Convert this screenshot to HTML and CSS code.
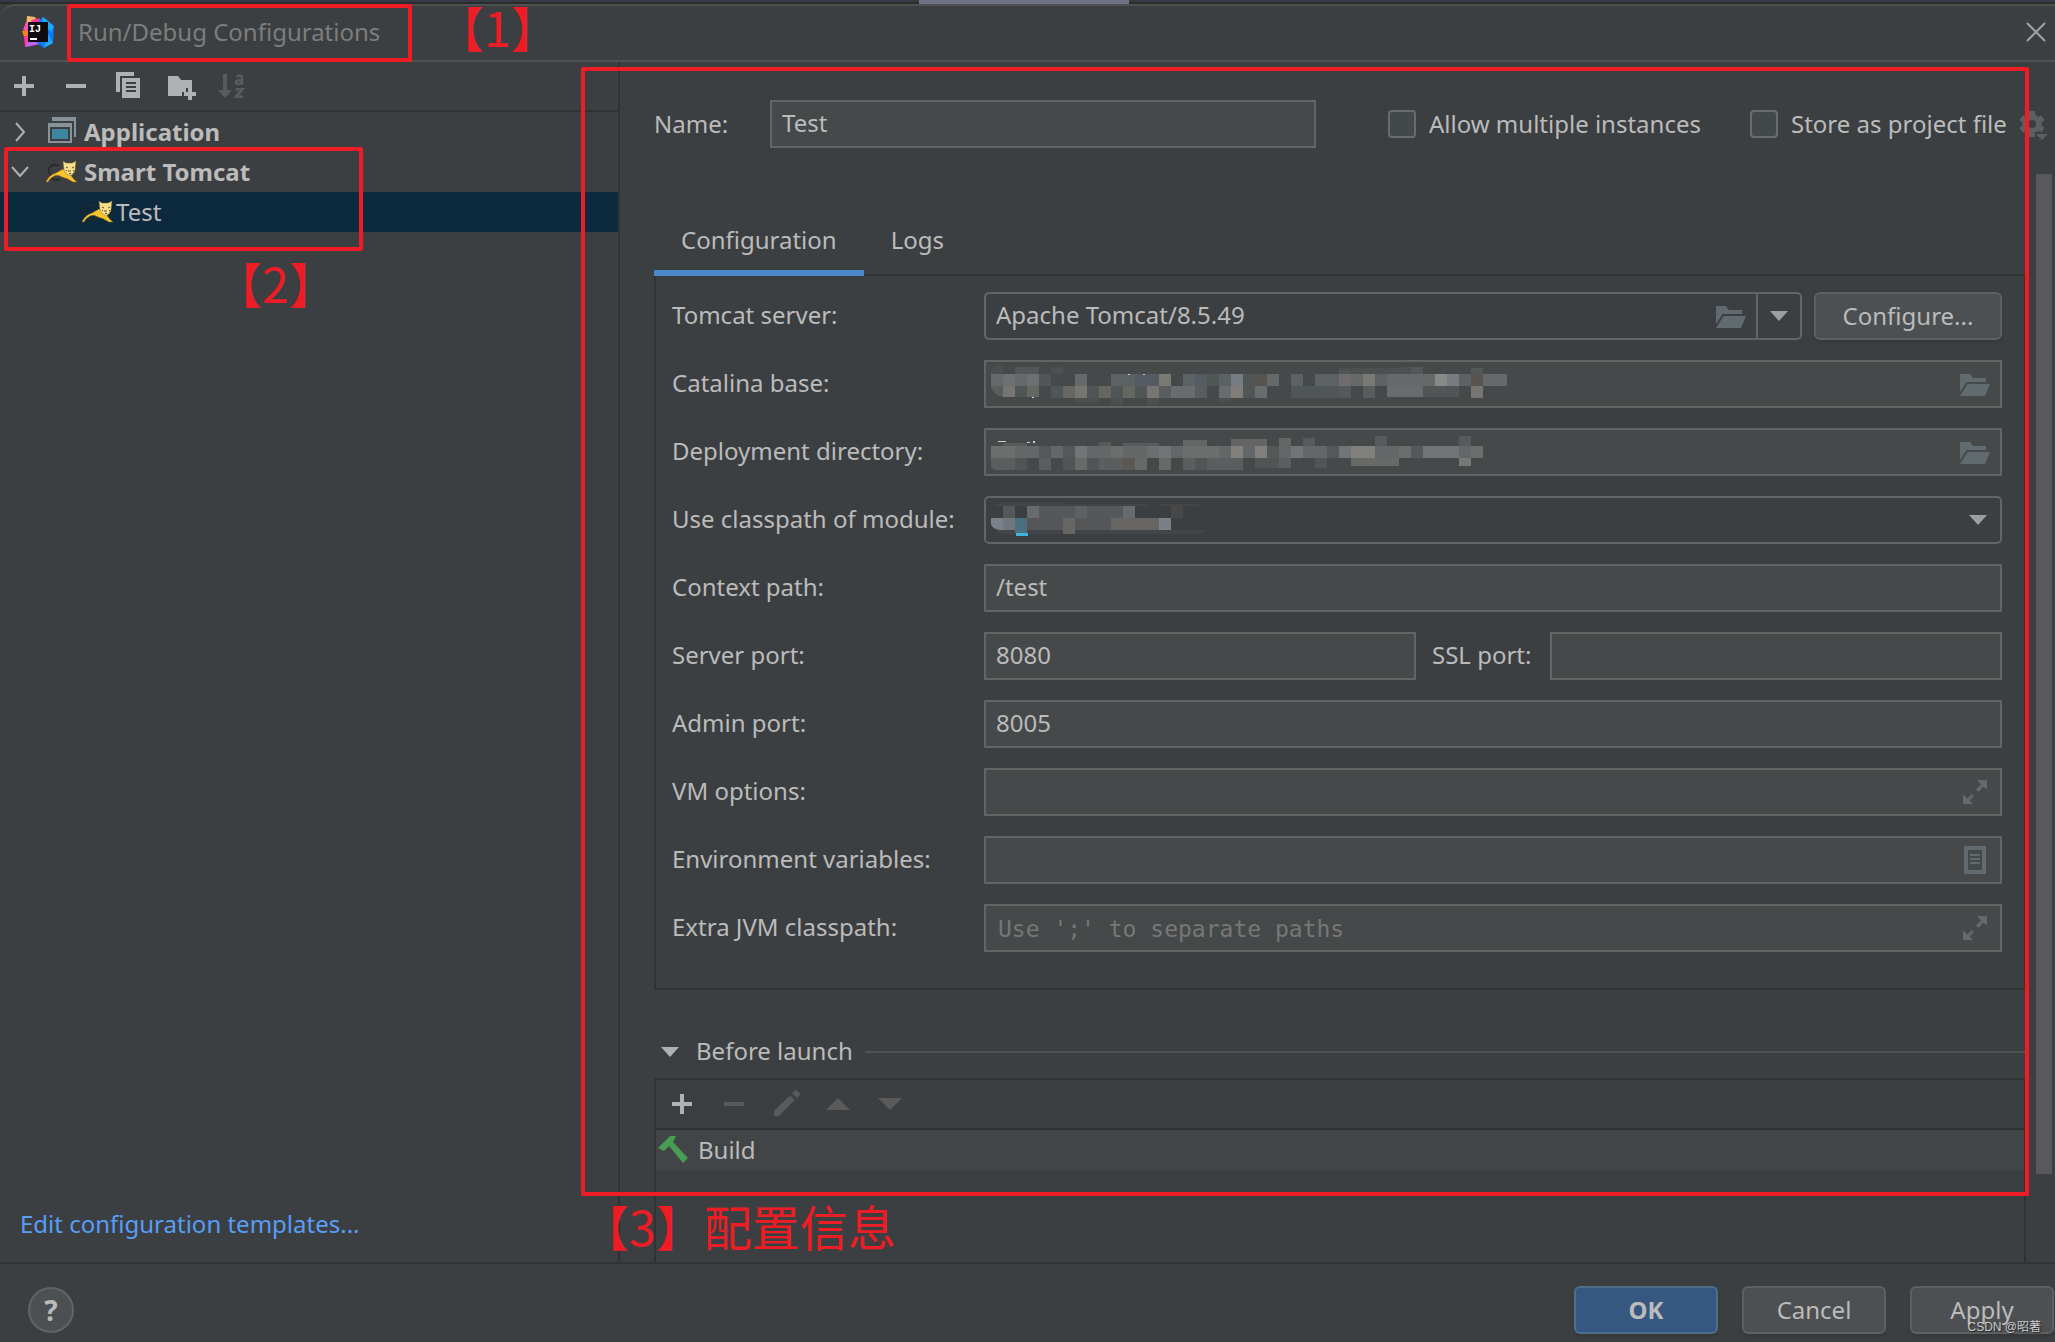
FILE: index.html
```html
<!DOCTYPE html>
<html lang="en">
<head>
<meta charset="utf-8">
<title>Run/Debug Configurations</title>
<link rel="stylesheet" href="styles.css">
</head>
<body>
<svg class="defs" width="0" height="0" aria-hidden="true">
  <symbol id="i-plus" viewBox="0 0 16 16"><path d="M7 3h2v4h4v2H9v4H7V9H3V7h4z"/></symbol>
  <symbol id="i-minus" viewBox="0 0 16 16"><path d="M3 7h10v2H3z"/></symbol>
  <symbol id="i-copy" viewBox="0 0 16 16"><path d="M2 1h9v2H4v8H2z"/><path fill-rule="evenodd" d="M5 4h9v10H5zM7 6v1h5V6zM7 8v1h5V8zM7 10v1h5v-1z"/></symbol>
  <symbol id="i-newfolder" viewBox="0 0 16 16"><path d="M2 3h5l1.500 2H14v4h-3v2H9v2H2z"/><path d="M12 9h2v2h2v2h-2v2h-2v-2h-2v-2h2z"/></symbol>
  <symbol id="i-sort" viewBox="0 0 16 16"><path d="M3.500 2h2v8H8l-3.500 4L1 10h2.500z"/><path fill="none" stroke="currentColor" stroke-width="1.300" d="M10.200 3.400q2.800-1.600 2.800.800v2.900M13 5q-3-.200-3 1.200 0 .900 1.300.800 1.200-.100 1.700-.900M9.700 9.600h3.500l-3.300 3.800h3.600"/></symbol>
  <symbol id="i-folder" viewBox="0 -1 16 16"><path d="M1 2h5l1.500 2H14v2H4.300L1 11z"/><path d="M4.800 7H16l-2.500 6H1z"/></symbol>
  <symbol id="i-expand" viewBox="0 0 16 16"><path d="M9.500 2H14.500V7L12.800 5.300 10.200 7.900 9 6.800 11.500 4.100zM2.500 9v5h5L5.800 12.300 8 10 6.900 9 4.500 11.200z"/></symbol>
  <symbol id="i-list" viewBox="0 0 16 16"><path fill-rule="evenodd" d="M3 1h11v14H3zM5 3v10h7V3z"/><path d="M6 5h5v1H6zM6 7h5v1H6zM6 9h5v1H6z"/></symbol>
  <symbol id="i-down" viewBox="0 0 18 10"><path d="M0 0h18L9 10z"/></symbol>
  <symbol id="i-edit" viewBox="0 0 16 16"><path d="M10 3.600 12.400 6 5.300 13.100 4.500 14H2v-2.500zM11 2.600l1.200-1.200q.800-.700 1.700.200l.600.600q.900.900.200 1.700L13.400 5z"/></symbol>
  <symbol id="i-up" viewBox="0 0 16 16"><path d="M8 5l6 6H2z"/></symbol>
  <symbol id="i-dn" viewBox="0 0 16 16"><path d="M8 11L2 5h12z"/></symbol>
  <symbol id="i-cat" viewBox="0 0 32 32">
    <path fill="none" stroke="#26282a" stroke-width="1.500" d="M13 10Q7 7 3 12q-1 4 2 7M6 22q3 4 8 1"/>
    <path fill="#fcc52b" stroke="#7d6420" stroke-width=".500" d="M0 26q3-7 10-9l7-4 7 5q3 5 7 8l-4 0q-6-4-11-5-4-3-8-1-4 2-6 6z"/>
    <path fill="#fbe08a" stroke="#7d6420" stroke-width=".500" d="M17 5l3 2h6l4-2-1 9q-1 4-5 6-5-2-6-6z"/>
    <path fill="none" stroke="#5a4c26" stroke-width="1" d="M20 11l2 1M28 11l-2 1M22 15h3M23 17l1 1 1-1M20 14l1 1M28 14l-1 1"/>
  </symbol>
</svg>

<div class="backdrop"><span></span></div>

<header class="titlebar">
  <svg class="logo" viewBox="0 0 32 32" aria-hidden="true">
    <path fill="#fdb66a" d="M5 0l8 1 3 6-12 6z"/>
    <path fill="#ff318c" d="M10 4l7-2 3 6-8 6-8-2z"/>
    <path fill="#ff4fb0" d="M4 6l6 4-2 8-7-4z"/>
    <path fill="#f9821e" d="M0 15l8-1v8l-6-1z"/>
    <path fill="#ff3aa5" d="M2 20h8l5 8-12 3z"/>
    <path fill="#c063f0" d="M5 26l9-1 4 3-14 3z"/>
    <path fill="#087cfa" d="M17 5l4-4 11 9-1 17-9 5-8-6z"/>
    <path fill="#1fa8f7" d="M21 1l11 9-3 6-9-9zM26 18l5 9-9 5z"/>
    <path fill="#100a10" d="M6 6h20v20H6z"/>
    <path fill="#fff" d="M8 22h7v2H8z"/>
    <text x="7" y="16" font-family="Liberation Mono" font-weight="700" font-size="10" fill="#fff">IJ</text>
  </svg>
  <h1 class="title">Run/Debug Configurations<span class="mark mark-title"></span></h1>
  <span class="note note-1" lang="zh">【1】</span>
  <button class="close" aria-label="Close"><svg viewBox="0 0 20 20"><path d="M1 1l18 18M19 1L1 19"/></svg></button>
</header>

<main class="main">
  <aside class="sidebar">
    <div class="toolbar side-tools">
      <button aria-label="Add"><svg><use href="#i-plus"/></svg></button>
      <button aria-label="Remove"><svg><use href="#i-minus"/></svg></button>
      <button aria-label="Copy"><svg><use href="#i-copy"/></svg></button>
      <button aria-label="New folder"><svg><use href="#i-newfolder"/></svg></button>
      <button aria-label="Sort" disabled><svg><use href="#i-sort"/></svg></button>
    </div>
    <ul class="tree">
      <li class="row group">
        <svg class="chev" viewBox="0 0 20 20"><path d="M6 1l8 9-8 9"/></svg>
        <svg class="icon" viewBox="0 0 32 32"><path fill="#87939a" d="M6 1h24v20h-2V5H6z"/><path fill="#87939a" fill-rule="evenodd" d="M2 7h24v20H2zM4 11v14h20V11z"/><path fill="#3e86a0" d="M6 13h16v10H6z"/></svg>
        Application
      </li>
      <li class="row group">
        <svg class="chev" viewBox="0 0 20 20"><path d="M2 5l8 9 8-9"/></svg>
        <svg class="icon"><use href="#i-cat"/></svg>
        Smart Tomcat
      </li>
      <li class="row leaf selected"><svg class="icon"><use href="#i-cat"/></svg>Test</li>
    </ul>
    <a class="templates" href="#">Edit configuration templates...</a>
    <span class="mark mark-tree"></span>
    <span class="note note-2" lang="zh">【2】</span>
  </aside>

  <section class="editor">
    <div class="name-row">
      <label for="name">Name:</label>
      <input class="field" id="name" value="Test">
      <label class="check"><input type="checkbox">Allow multiple instances</label>
      <label class="check"><input type="checkbox">Store as project file</label>
      <button class="gear" aria-label="Storage options"><svg viewBox="0 0 32 32"><circle class="ring" cx="16" cy="16" r="7"/><path class="teeth" d="M16 3v6M16 23v6M5 10l5 3M22 19l5 3M5 22l5-3M22 13l5-3"/><path class="cut" d="M18 24h14v8H22z"/><path d="M20 26h12l-6 6z"/></svg></button>
    </div>

    <nav class="tabs">
      <button class="tab active">Configuration</button>
      <button class="tab">Logs</button>
    </nav>

    <form class="panel">
      <label for="server">Tomcat server:</label>
      <div class="line">
        <div class="combo">
          <select id="server"><option>Apache Tomcat/8.5.49</option></select>
          <svg class="hint"><use href="#i-folder"/></svg>
          <span class="drop"><svg><use href="#i-down"/></svg></span>
        </div>
        <button class="btn configure" type="button">Configure...</button>
      </div>

      <label for="base">Catalina base:</label>
      <div class="box">
        <input id="base">
        <svg class="mosaic" viewBox="0 0 516 48" aria-hidden="true">
          <path fill="#4c5050" d="M6 4h6v8H0v-2q1-5 6-6zM60 5h12v7H60zM348 6h60v6h-60zM408 5h12v7h-12zM84 36h24v4H84zM120 36h12v7h-12zM156 36h12v7h-12zM228 36h12v4h-12z"/>
          <path fill="#535757" d="M24 5h24v7H24zM420 5h12v7h-12zM480 6h12v6h-12zM348 9h12v3h-12z"/>
          <g transform="translate(0 12)"><path fill="#666969" d="M0 0h48v12H0zM84 0h12v12H84zM276 0h12v12h-12zM360 0h12v12h-12zM396 0h48v12h-48zM492 0h24v12h-24z"/><path fill="#6c7071" d="M12 0h12v12H12zM36 0h12v12H36z"/><path fill="#505555" d="M48 0h12v12H48zM216 0h12v12h-12zM252 0h12v12h-12z"/><path fill="#5c6163" d="M120 0h24v12h-24zM192 0h24v12h-24zM228 0h12v12h-12zM300 0h12v12h-12zM324 0h24v12h-24zM384 0h12v12h-12zM468 0h12v12h-12z"/><path fill="#545b62" d="M144 0h24v12h-24zM204 0h12v12h-12z"/><path fill="#7b7974" d="M168 0h12v12h-12zM372 0h12v12h-12z"/><path fill="#777b82" d="M240 0h12v12h-12zM456 0h12v12h-12z"/><path fill="#58534f" d="M264 0h12v12h-12zM480 0h12v12h-12z"/><path fill="#6e6c6c" d="M348 0h12v12h-12z"/><path fill="#888a88" d="M444 0h12v12h-12z"/></g>
          <g transform="translate(0 24)"><path fill="#5a5d5d" d="M0 0h12v11Q1 9 0 0zM204 0h12v12h-12zM372 0h12v12h-12zM168 0h12v12h-12z"/><path fill="#777571" d="M12 0h12v11H12zM84 0h12v12H84zM156 0h12v12h-12zM480 0h12v12h-12z"/><path fill="#505556" d="M24 0h12v11H24zM60 0h12v12H60zM96 0h12v12H96zM120 0h12v12h-12zM144 0h12v12h-12zM252 0h12v12h-12zM300 0h48v12h-48zM432 0h36v11h-36z"/><path fill="#676762" d="M36 0h12v11H36zM72 0h12v12H72zM108 0h12v12h-12zM132 0h12v12h-12z"/><path fill="#676c6e" d="M180 0h24v12h-24zM228 0h12v12h-12zM264 0h12v12h-12zM396 0h36v11h-36z"/><path fill="#807c78" d="M240 0h12v12h-12z"/><path fill="#54595d" d="M348 0h12v12h-12z"/></g>
          <path fill="#ccc" d="M137 12h2v1h-2zM152 12h2v1h-2zM41 35h2v1h-2z"/>
        </svg>
        <svg class="hint"><use href="#i-folder"/></svg>
      </div>

      <label for="deploy">Deployment directory:</label>
      <div class="box">
        <input id="deploy">
        <svg class="mosaic" viewBox="0 -4 516 48" aria-hidden="true">
          <path fill="#555a5a" d="M12 9h24v3H12zM108 8h12v4h-12zM132 9h36v3h-36zM384 2h12v10h-12zM468 2h12v10h-12zM312 4h12v8h-12z"/>
          <path fill="#646665" d="M192 6h24v6h-24zM240 5h36v7h-36zM288 4h12v8h-12z"/>
          <g transform="translate(0 12)"><path fill="#636768" d="M0 0h492v12H0z"/><path fill="#6b6e6d" d="M0 0h24v12H0zM120 0h12v12h-12zM156 0h24v12h-24zM192 0h36v12h-36zM408 0h12v12h-12zM480 0h12v12h-12z"/><path fill="#545859" d="M48 0h12v12H48zM72 0h12v12H72zM276 0h12v12h-12zM336 0h12v12h-12zM420 0h12v12h-12z"/><path fill="#717577" d="M84 0h12v12H84zM168 0h12v12h-12zM300 0h12v12h-12zM348 0h36v12h-36zM432 0h36v12h-36z"/><path fill="#81807d" d="M240 0h12v12h-12zM264 0h12v12h-12zM360 0h24v12h-24z"/></g>
          <g transform="translate(0 24)"><path fill="#5a5e5e" d="M0 0h24v12H6q-6 0-6-6zM48 0h12v12H48zM84 0h12v12H84zM108 0h48v12h-48zM192 0h12v12h-12zM216 0h36v12h-36zM288 0h12v10h-12z"/><path fill="#505556" d="M24 0h12v12H24zM72 0h12v12H72zM96 0h12v12H96zM204 0h12v12h-12zM264 0h24v10h-24zM324 0h12v10h-12z"/><path fill="#686a68" d="M84 0h12v12H84zM144 0h12v12h-12zM168 0h12v12h-12zM360 0h48v8h-48z"/><path fill="#5d584f" d="M132 0h12v12h-12z"/><path fill="#757975" d="M468 0h12v8h-12z"/></g>
          <path fill="#ccc" d="M7 7h8v1H7zM36 8h3v1h-3zM42 7h2v2h-2z"/>
        </svg>
        <svg class="hint"><use href="#i-folder"/></svg>
      </div>

      <label for="module">Use classpath of module:</label>
      <div class="combo">
        <select id="module"></select>
        <svg class="mosaic" viewBox="0 2 516 48" aria-hidden="true">
          <path fill="#434648" d="M2 10q2-3 10-3h36l12 0h12v1h84v2zM168 8h36q6 0 9 2h-45zM4 34h210q-3 4-9 4H12q-6 0-8-4z"/>
          <g transform="translate(0 10)"><path fill="#54585a" d="M12 0h12v12H12zM48 0h84v12H48z"/><path fill="#686b6e" d="M36 0h12v12H36zM132 0h12v12h-12z"/><path fill="#5e6163" d="M84 0h12v12H84z"/><path fill="#484849" d="M180 0h12v12h-12z"/></g>
          <g transform="translate(0 22)"><path fill="#7a8087" d="M0 0h12v12H9Q1 11 0 6zM168 0h12v12h-12z"/><path fill="#6e787c" d="M12 0h12v12H12z"/><path fill="#4a7080" d="M24 0h12v15H24z"/><path fill="#545657" d="M36 0h48v12H36zM84 0h36v12H84z"/><path fill="#676662" d="M72 0h12v12H72zM120 0h48v12h-48zM72 12h12v4H72z"/><path fill="#45b4dc" d="M25 15h12v3H25z"/></g>
        </svg>
        <span class="drop plain"><svg><use href="#i-down"/></svg></span>
      </div>

      <label for="context">Context path:</label>
      <input class="field" id="context" value="/test">

      <label for="port">Server port:</label>
      <div class="line ports">
        <input class="field" id="port" value="8080">
        <label for="ssl">SSL port:</label>
        <input class="field" id="ssl">
      </div>

      <label for="admin">Admin port:</label>
      <input class="field" id="admin" value="8005">

      <label for="vm">VM options:</label>
      <div class="box"><input id="vm"><svg class="hint"><use href="#i-expand"/></svg></div>

      <label for="env">Environment variables:</label>
      <div class="box"><input id="env"><svg class="hint"><use href="#i-list"/></svg></div>

      <label for="extra">Extra JVM classpath:</label>
      <div class="box"><input class="mono" id="extra" placeholder="Use ';' to separate paths"><svg class="hint"><use href="#i-expand"/></svg></div>
    </form>

    <h2 class="before"><svg><use href="#i-down"/></svg><span>Before launch</span></h2>
    <div class="tasks">
      <div class="toolbar task-tools">
        <button aria-label="Add task"><svg><use href="#i-plus"/></svg></button>
        <button aria-label="Remove task" disabled><svg><use href="#i-minus"/></svg></button>
        <button aria-label="Edit task" disabled><svg><use href="#i-edit"/></svg></button>
        <button aria-label="Move up" disabled><svg><use href="#i-up"/></svg></button>
        <button aria-label="Move down" disabled><svg><use href="#i-dn"/></svg></button>
      </div>
      <div class="task"><svg viewBox="0 0 32 32"><path fill="#499c54" d="M1 14L13 2h6l-3 6 15 16-5 5-14-17-5 5z"/></svg>Build</div>
    </div>
    <span class="scrollbar"></span>
  </section>
  <span class="mark mark-editor"></span>
  <span class="note note-3" lang="zh">【3】配置信息</span>
</main>

<footer class="footer">
  <button class="help" aria-label="Help">?</button>
  <button class="btn ok">OK</button>
  <button class="btn">Cancel</button>
  <button class="btn">Apply</button>
  <span class="watermark" lang="zh">CSDN @昭著</span>
</footer>
</body>
</html>
```
FILE: styles.css
```css
* { box-sizing: border-box; }

body {
  margin: 0;
  min-height: 100vh;
  display: flex;
  flex-direction: column;
  background: #3c3f41;
  color: #bbb;
  font: 24px/32px "Noto Sans", "Open Sans", sans-serif;
}

button, input, select { font: inherit; color: inherit; margin: 0; }
button { padding: 0; border: 0; background: none; }
h1, h2 { margin: 0; font: inherit; }
svg { display: block; fill: currentColor; flex: none; }
.defs { position: absolute; }

/* desktop behind the window */
.backdrop { height: 4px; background: linear-gradient(#353a44 50%, #2b2b2b 50%); }
.backdrop span { display: block; width: 210px; height: 4px; margin-left: 919px; background: #6d7384; }

/* title bar */
.titlebar {
  display: flex;
  align-items: center;
  height: 58px;
  padding: 0 9px 2px 22px;
  border-top: 2px solid #4e5052;
  border-bottom: 2px solid #515151;
  border-top-left-radius: 16px;
}
.logo { width: 32px; height: 32px; }
.title { position: relative; margin-left: 24px; color: #7d7d7d; }
.note-1 { position: absolute; left: 436px; top: 2px; }
.close { margin-left: auto; }
.close svg { width: 20px; height: 20px; stroke: #a0a0a0; stroke-width: 2; }

/* annotations */
.mark { position: absolute; border: 4px solid #ee1c24; border-radius: 2px; pointer-events: none; }
.note { color: #ee1c24; font: 48px/48px "Noto Sans CJK SC", sans-serif; white-space: nowrap; }
.mark-title { left: -11px; top: -12px; width: 345px; height: 58px; }
.mark-tree { left: 4px; top: 85px; width: 359px; height: 104px; }
.note-2 { position: absolute; left: 214px; top: 196px; }
.mark-editor { left: 581px; right: 26px; top: 5px; bottom: 66px; }
.note-3 { position: absolute; left: 581px; bottom: 13px; }

.main { flex: 1; display: flex; position: relative; }

/* toolbars */
.toolbar { display: flex; gap: 20px; height: 50px; align-items: center; border-bottom: 2px solid #323232; }
.toolbar svg { width: 32px; height: 32px; color: #afb1b3; }
.toolbar button:disabled svg { color: #5a5a5a; }
.side-tools { padding-left: 8px; }
.task-tools { padding-left: 10px; }

/* configuration tree */
.sidebar {
  position: relative;
  flex: 0 0 620px;
  display: flex;
  flex-direction: column;
  border-right: 2px solid #323232;
}
.tree { list-style: none; margin: 0; padding: 0; }
.row { display: flex; align-items: center; height: 40px; }
.group { font-weight: 700; padding-left: 10px; }
.leaf { padding-left: 82px; }
.selected { background: #0d293e; }
.chev { width: 20px; height: 20px; fill: none; stroke: #afb1b3; stroke-width: 2; margin-right: 16px; }
.row .icon { width: 32px; height: 32px; margin-right: 6px; }
.leaf .icon { margin-right: 2px; }
.templates { margin-top: auto; padding: 0 20px 22px; color: #589df6; text-decoration: none; }

/* editor */
.editor {
  position: relative;
  flex: 1;
  min-width: 0;
  display: flex;
  flex-direction: column;
  padding: 38px 29px 0 34px;
}
.name-row {
  display: grid;
  grid-template-columns: 116px 1fr 362px 266px 32px;
  align-items: center;
  margin-right: -22px;
}
.name-row .field { margin-right: 72px; }
.check { display: flex; align-items: center; gap: 13px; white-space: nowrap; }
.check input {
  appearance: none;
  width: 28px;
  height: 28px;
  border: 2px solid #6b6b6b;
  border-radius: 4px;
  background: #43494a;
}
.gear svg { width: 32px; height: 32px; color: #5c5e60; }
.ring, .teeth { fill: none; stroke: currentColor; stroke-width: 6; }
.cut { fill: #3c3f41; }

.field, .box, .combo {
  width: 100%;
  min-width: 0;
  height: 48px;
  border: 2px solid #646464;
  background: #45494a;
}
.field { padding: 0 10px 4px; border-radius: 0; }
.name-row .field { width: auto; }
.box, .combo { position: relative; display: flex; align-items: center; }
.combo { background: #3c3f41; border-radius: 5px; }
.box input, .combo select {
  flex: 1;
  min-width: 0;
  height: 44px;
  padding: 0 10px 2px;
  border: 0;
  background: none;
  appearance: none;
}
.box .mono { padding: 2px 0 0 12px; font: 23px/32px "DejaVu Sans Mono", monospace; }
.mono::placeholder { color: #777; opacity: 1; }
.hint { width: 32px; height: 32px; margin-right: 10px; color: #616a6e; }
.drop {
  display: flex;
  align-items: center;
  justify-content: center;
  width: 44px;
  height: 44px;
  border-left: 2px solid #646464;
  pointer-events: none;
}
.drop svg { width: 18px; height: 10px; color: #9c9fa1; }
.plain { border-left: 0; }
.mosaic { position: absolute; left: 5px; top: 0; width: 516px; height: 48px; }

.tabs { display: flex; margin-top: 62px; box-shadow: inset 0 -2px #323232; }
.tab { height: 66px; padding: 0 27px; border-bottom: 6px solid transparent; }
.tab.active { border-bottom-color: #4a88c7; }

.panel {
  display: grid;
  grid-template-columns: 312px 1fr;
  align-items: center;
  row-gap: 20px;
  padding: 16px 22px 36px 16px;
  border: 2px solid #323232;
  border-top: 0;
}
.panel label, .before span { padding-bottom: 2px; }
.line { display: flex; align-items: center; gap: 12px; min-width: 0; }
.ports { display: grid; grid-template-columns: 432fr 102px 452fr; gap: 16px; }

.btn {
  width: 144px;
  height: 48px;
  flex: none;
  border: 2px solid #5e6060;
  border-radius: 6px;
  background: #4c5052;
  box-shadow: 0 3px 2px #37393a;
}
.configure { width: 188px; }
.ok { background: #365880; border-color: #4c708c; font-weight: 700; }

.before { display: flex; align-items: center; height: 52px; margin-top: 36px; padding-left: 7px; }
.before svg { width: 18px; height: 10px; margin-right: 17px; color: #afb1b3; }
.before::after { content: ""; flex: 1; height: 2px; margin-left: 12px; background: #515151; }
.tasks { flex: 1; min-height: 184px; border: 2px solid #323232; border-bottom: 0; }
.task { display: flex; align-items: center; gap: 9px; height: 40px; padding-left: 1px; background: #414547; }
.task svg { width: 32px; height: 32px; }
.scrollbar { position: absolute; top: 112px; bottom: 88px; right: 3px; width: 16px; background: #59595b; }

/* footer */
.footer {
  position: relative;
  display: flex;
  align-items: flex-start;
  gap: 24px;
  height: 80px;
  padding: 22px 1px 0 28px;
  border-top: 2px solid #323232;
}
.help {
  width: 46px;
  height: 46px;
  margin: 1px auto 0 0;
  border: 2px solid #626464;
  border-radius: 50%;
  background: #4c5052;
  font-size: 28px;
  font-weight: 700;
}
.watermark {
  position: absolute;
  right: 14px;
  bottom: 6px;
  color: #ccc;
  font: 12px/18px "Liberation Sans", "Noto Sans CJK SC", sans-serif;
  text-shadow: 1px 1px 1px #222;
}
```
